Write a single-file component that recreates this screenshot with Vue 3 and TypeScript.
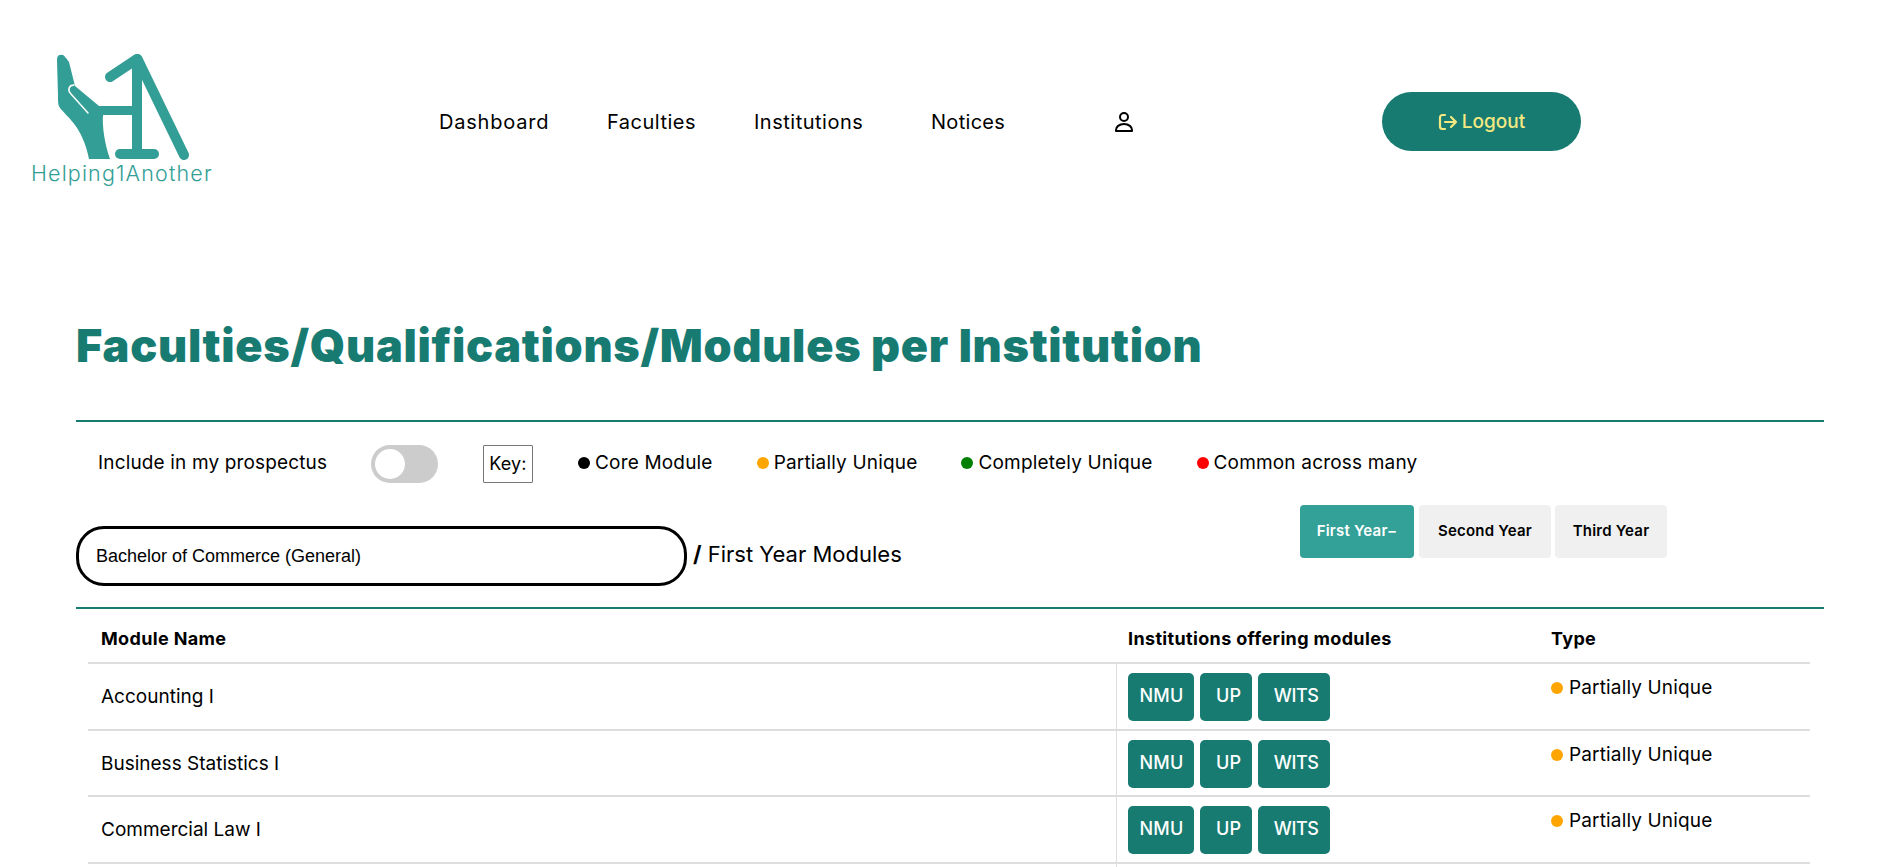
<script setup lang="ts">
const nav = [
  { label: 'Dashboard', cls: 'n1' },
  { label: 'Faculties', cls: 'n2' },
  { label: 'Institutions', cls: 'n3' },
  { label: 'Notices', cls: 'n4' },
]
const keys = [
  { label: 'Core Module', color: '#000000' },
  { label: 'Partially Unique', color: '#ffa500' },
  { label: 'Completely Unique', color: '#008000' },
  { label: 'Common across many', color: '#ff0000' },
]
const years = [
  { label: 'First Year−', active: true },
  { label: 'Second Year', active: false },
  { label: 'Third Year', active: false },
]
const rows = ['Accounting I', 'Business Statistics I', 'Commercial Law I']
const badges = ['NMU', 'UP', 'WITS']
</script>

<template>
  <div class="page">
    <header class="topbar">
      <div class="brand">
        <svg class="mark" viewBox="0 30 220 130" width="220" height="130" aria-hidden="true">
          <path fill="#339e95" d="M60 55C62 54 64 55 66 58L69 62 75 86 99 106H135V115H103C102 127 105 145 110 159H89C86 143 80 132 75 125 70 118 63 112 60 108 58 105 58 102 58 96L57 60C57 57 58 55 60 55Z" />
          <path fill="none" stroke="#fff" stroke-width="1.5" stroke-linecap="round" d="M88 113L71 94C67 90 69 85 74 85" />
          <g fill="none" stroke="#339e95" stroke-width="10" stroke-linecap="round" stroke-linejoin="round">
            <path d="M110 77L137 59" />
            <path d="M137 60V154" />
            <path d="M120 154H154" />
            <path d="M137.5 59L184 155" />
          </g>
        </svg>
        <span class="wordmark">Helping1Another</span>
      </div>
      <nav class="nav">
        <a v-for="item in nav" :key="item.label" :class="['nav-link', item.cls]">{{ item.label }}</a>
        <svg class="user" viewBox="0 0 24 24" width="24" height="24" fill="none" stroke="#000" stroke-width="2" aria-hidden="true">
          <circle cx="12" cy="7" r="4" />
          <path d="M4 21v-1c0-3 3-6 8-6s8 3 8 6v1z" stroke-linejoin="round" />
        </svg>
      </nav>
      <button class="logout">
        <svg viewBox="0 0 20 20" width="20" height="20" fill="none" stroke="#f4e881" stroke-width="2.2" stroke-linecap="round" stroke-linejoin="round" aria-hidden="true">
          <path d="M7 3H4.5C3 3 2 4 2 5.5v9C2 16 3 17 4.5 17H7" />
          <path d="M7 10h11M13 5l5 5-5 5" />
        </svg>
        <span>Logout</span>
      </button>
    </header>

    <main class="content">
      <h1 class="title">Faculties/Qualifications/Modules per Institution</h1>
      <div class="controls">
        <span class="include">Include in my prospectus</span>
        <span class="toggle"><span class="knob"></span></span>
        <span class="key">Key:</span>
        <span v-for="k in keys" :key="k.label" class="key-item">
          <i class="dot" :style="{ background: k.color }"></i>{{ k.label }}
        </span>
      </div>
      <div class="selector">
        <div class="qual">Bachelor of Commerce (General)</div>
        <span class="crumb"><b>/</b> First Year Modules</span>
        <div class="years">
          <button v-for="y in years" :key="y.label" :class="['year', { active: y.active }]">{{ y.label }}</button>
        </div>
      </div>
      <div class="table">
        <div class="row head">
          <div class="c1">Module Name</div>
          <div class="c2">Institutions offering modules</div>
          <div class="c3">Type</div>
        </div>
        <div v-for="r in rows" :key="r" class="row">
          <div class="c1 name">{{ r }}</div>
          <div class="c2 badges">
            <span v-for="b in badges" :key="b" class="badge">{{ b }}</span>
          </div>
          <div class="c3 type"><i class="dot big"></i>Partially Unique</div>
        </div>
        <div class="row">
          <div class="c1"></div>
          <div class="c2 badges"></div>
          <div class="c3"></div>
        </div>
      </div>
    </main>
  </div>
</template>

<style scoped>
.page {
  height: 867px;
  overflow: hidden;
  background: #fff;
  color: #000;
  font-family: Inter, "Liberation Sans", sans-serif;
}
.topbar {
  height: 185px;
  display: flex;
  align-items: flex-start;
}
.brand {
  width: 439px;
  padding-top: 30px;
  box-sizing: border-box;
  display: flex;
  flex-direction: column;
}
.mark { display: block; }
.wordmark {
  font-size: 21.5px;
  letter-spacing: 1.15px;
  font-weight: 300;
  color: #339e95;
  line-height: 24px;
  margin: 1px 0 0 31px;
  white-space: nowrap;
}
.nav {
  display: flex;
  align-items: center;
  height: 60px;
  margin-top: 92px;
  width: 943px;
}
.nav-link { font-size: 20px; letter-spacing: 0.5px; white-space: nowrap; }
.n1 { width: 169px; letter-spacing: 0.8px; }
.n2 { width: 146px; margin-left: -1px; }
.n3 { width: 176px; margin-left: 1px; }
.n4 { width: 181px; margin-left: 1px; letter-spacing: 0.3px; }
.user { flex: none; }
.logout {
  margin-top: 92px;
  width: 199px;
  height: 59px;
  border: 0;
  border-radius: 30px;
  background: #177b72;
  color: #f4e881;
  font: 500 19px Inter, "Liberation Sans", sans-serif;
  display: flex;
  align-items: center;
  justify-content: center;
  gap: 4px;
}
.content { padding: 0 77px 0 76px; }
.title {
  margin: 0;
  padding-top: 135px;
  height: 100px;
  font-size: 45px;
  letter-spacing: 0.72px;
  line-height: 52px;
  font-weight: 900;
  color: #177b72;
  white-space: nowrap;
}
.controls {
  border-top: 2px solid #177b72;
  height: 78px;
  padding: 23px 0 0 22px;
  box-sizing: border-box;
  display: flex;
  align-items: flex-start;
  font-size: 19px;
  letter-spacing: 0.15px;
}
.include { width: 273px; line-height: 36px; white-space: nowrap; }
.toggle {
  width: 67px;
  height: 38px;
  border-radius: 19px;
  background: #ccc;
  display: block;
  padding: 4px 0 0 4px;
  box-sizing: border-box;
}
.knob { display: block; width: 30px; height: 30px; border-radius: 50%; background: #fff; }
.key {
  margin: 0 1px 0 45px;
  width: 50px;
  height: 38px;
  border: 1px solid #777;
  box-sizing: border-box;
  line-height: 36px;
  text-align: center;
  border-radius: 1px;
  font-size: 18px;
}
.key-item { line-height: 36px; letter-spacing: 0.18px; white-space: nowrap; margin-left: 44px; display: flex; align-items: center; }
.key-item .dot { margin-right: 5px; }
.dot { display: inline-block; width: 12px; height: 12px; border-radius: 50%; flex: none; }
.selector {
  height: 109px;
  display: flex;
  align-items: flex-start;
  position: relative;
}
.qual {
  margin-top: 28px;
  width: 611px;
  height: 60px;
  border: 3px solid #000;
  border-radius: 28px;
  box-sizing: border-box;
  padding-left: 17px;
  font: 18px/54px "Liberation Sans", Arial, sans-serif;
}
.crumb { margin: 37px 0 0 6px; font-size: 22px; line-height: 38px; white-space: nowrap; }
.crumb b { font-weight: 700; }
.years {
  position: absolute;
  left: 1224px;
  top: 7px;
  display: flex;
  gap: 5px;
}
.year {
  height: 53px;
  border: 0;
  border-radius: 4px;
  background: #f0f0f0;
  color: #000;
  font: 600 15px Inter, "Liberation Sans", sans-serif;
  letter-spacing: 0.2px;
  padding: 0 0 2px;
  white-space: nowrap;
}
.year:nth-child(1) { width: 114px; }
.year:nth-child(2) { width: 132px; }
.year:nth-child(3) { width: 112px; margin-left: -1px; }
.year.active { background: #33a198; color: #fff; }
.table {
  border-top: 2px solid #177b72;
  padding: 0 14px 0 12px;
}
.row {
  display: grid;
  grid-template-columns: 1028px 435px 1fr;
  height: 66.5px;
  border-bottom: 2px solid #ddd;
  box-sizing: border-box;
}
.row.head { height: 55px; font-weight: 700; font-size: 18px; letter-spacing: 0.35px; }
.head > div { padding-top: 4px; line-height: 52px; white-space: nowrap; }
.head .c1 { padding-left: 13px; }
.head .c2 { padding-left: 12px; }
.c1.name { padding-left: 13px; font-size: 19px; line-height: 66px; }
.c2.badges { border-left: 1px solid #ddd; padding: 9px 0 0 11px; display: flex; gap: 6px; align-items: flex-start; }
.badge {
  height: 48px;
  padding: 0 11px 0 11.5px;
  background: #177b72;
  color: #fff;
  font-weight: 500;
  font-size: 18px;
  letter-spacing: 0.2px;
  line-height: 46px;
  border-radius: 5px;
}
.badge:nth-child(2) { padding-left: 15.5px; }
.badge:nth-child(3) { padding-left: 15.5px; letter-spacing: -0.4px; }
.type { padding-top: 11px; font-size: 19px; letter-spacing: 0.15px; line-height: 26px; display: flex; align-items: flex-start; white-space: nowrap; }
.dot.big { background: #ffa500; margin: 7px 6px 0 0; }
</style>

<style>
html, body { margin: 0; background: #fff; }
</style>
